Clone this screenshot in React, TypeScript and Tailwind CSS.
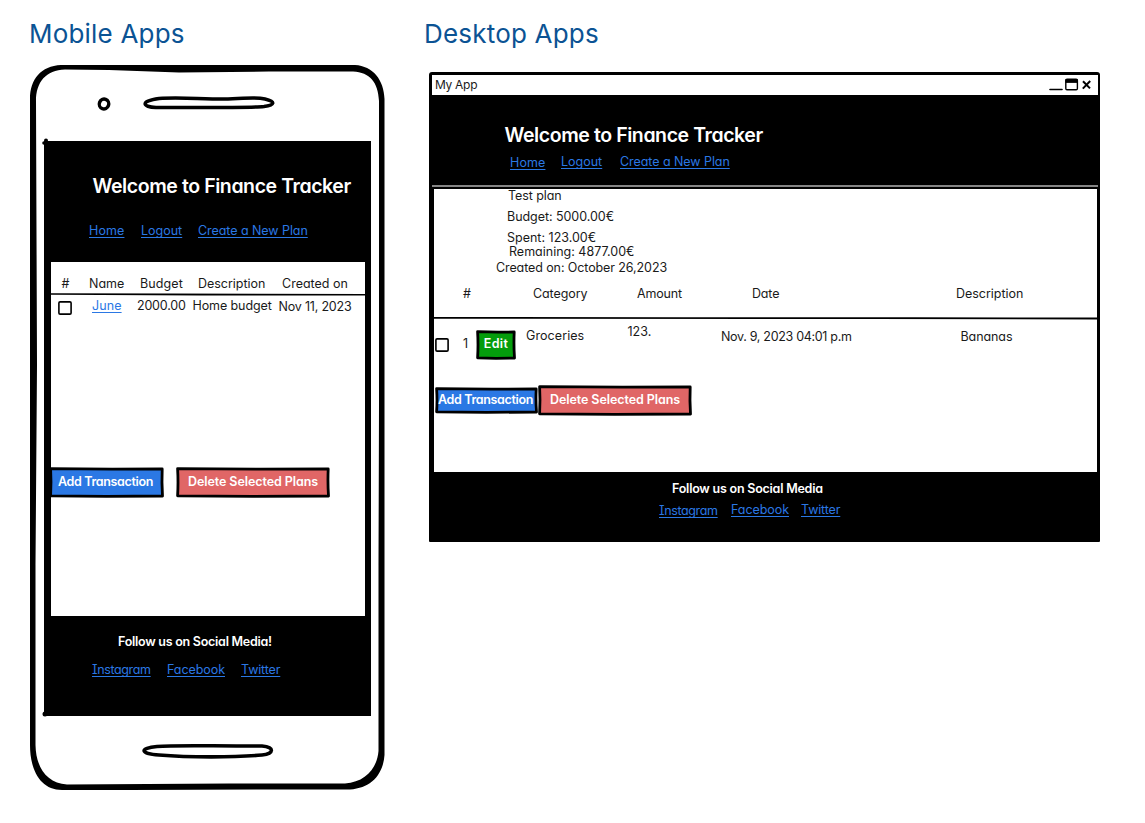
import React from "react";

function T({ c, children }: { c: string; children: string }) {
  return <span className={`block shrink-0 whitespace-nowrap ${c}`}>{children}</span>;
}

function Link({ c, children }: { c: string; children: string }) {
  return (
    <a
      href="#"
      className={`block shrink-0 whitespace-nowrap text-[#2b78e4] underline decoration-1 underline-offset-2 [text-decoration-skip-ink:none] ${c}`}
    >
      {children}
    </a>
  );
}

function Checkbox({ c }: { c: string }) {
  return (
    <svg className={`block h-3.5 w-3.5 shrink-0 ${c}`} viewBox="0 0 14 14">
      <rect x="0.900" y="0.900" width="12.200" height="12.200" rx="1.200" fill="#fff" stroke="#000" strokeWidth="1.600" />
    </svg>
  );
}

function SketchButton({
  w,
  h,
  fill,
  c,
  children,
}: {
  w: number;
  h: number;
  fill: string;
  c: string;
  children: React.ReactNode;
}) {
  return (
    <button className={`relative block shrink-0 text-[12.5px] leading-4 font-semibold text-white ${c}`}>
      <svg className="absolute inset-0" width={w} height={h} viewBox={`0 0 ${w} ${h}`}>
        <path
          d={`M1.6 1.6 L${w * 0.55} 2.2 L${w - 1.8} 2 Q${w - 2.4} ${h / 2} ${w - 1.5} ${h - 2} L${w * 0.5} ${h - 1.6} L1.6 ${h - 2.2} Q2.4 ${h / 2} 1.6 1.6 Z`}
          fill={fill}
          stroke="#000"
          strokeWidth="2.8"
          strokeLinejoin="round"
        />
      </svg>
      <span className="relative block">{children}</span>
    </button>
  );
}

function PhoneOutline() {
  return (
    <svg className="absolute inset-0" width="356" height="725" viewBox="0 0 356 725" fill="none">
      <path
        fill="#000"
        fillRule="evenodd"
        d="M32 0 H326 C344 1 355 15 355.500 34 V690 C354 710 342 723 321 724.500 H230 L100 725 L33 725 C12 725 1 706 1 680 V34 C1 14 12 1 32 0 Z
           M36 4.500 C17 5 7 17 7 36 L8 300 L6.500 500 V680 C7 703 18 718 38 719.500 L200 718.500 H316 C336 717 348 704 349.500 686 V500 L350 340 V36 C349 17 341 7.500 324 6.500 H240 L150 7.500 L80 5 Z"
      />
      <ellipse cx="75" cy="39" rx="4.700" ry="5" transform="rotate(20 75 39)" stroke="#000" strokeWidth="3.400" />
      <path
        d="M130 33.500 C150 32 170 34 195 34 C215 34 225 31.500 236 34 C247 36.500 246 40 235 41.500 C220 43 160 42.500 127 42.500 C113 42 111 36 130 33.500 Z"
        stroke="#000"
        strokeWidth="3.500"
      />
      <path
        d="M128 681.500 C145 680 175 681 233 681 C246 682 245 689 233 690 C205 692.500 160 692.500 130 690 C111 689 110 683 128 681.500 Z"
        stroke="#000"
        strokeWidth="3.600"
      />
      <circle cx="17" cy="75.500" r="2" fill="#000" />
      <circle cx="15" cy="78" r="1.800" fill="#000" />
      <circle cx="16" cy="649" r="2.500" fill="#000" />
    </svg>
  );
}

function Phone() {
  return (
    <section className="relative mt-4 h-[725px] w-[356px] pt-[76px] pl-[15px]">
      <PhoneOutline />
      <div className="relative h-[575px] w-[327px] bg-black pr-1.5 pl-[7px]">
        <header className="h-[121px] pt-[33px] text-white">
          <T c="ml-[41.5px] text-[19.5px] leading-6 font-semibold tracking-[-0.42px]">Welcome to Finance Tracker</T>
          <nav className="mt-[25px] flex">
            <Link c="ml-[38px] w-[52px] tracking-[0.1px]">Home</Link>
            <Link c="w-[57px]">Logout</Link>
            <Link c="tracking-[-0.06px]">Create a New Plan</Link>
          </nav>
        </header>
        <main className="h-[354px] bg-white pt-3.5">
          <div className="flex">
            <T c="ml-[10.5px] w-[27.5px]">#</T>
            <T c="w-[51px]">Name</T>
            <T c="w-[58px] tracking-[0.1px]">Budget</T>
            <T c="w-[84px] tracking-[-0.03px]">Description</T>
            <T c="">Created on</T>
          </div>
          <svg className="mt-px block" width="314" height="3" viewBox="0 0 314 3">
            <path d="M0 0.200 L120 0.600 L314 0.900 V2.400 L150 2.500 L0 1.700 Z" fill="#000" />
          </svg>
          <div className="mt-0.5 flex">
            <Checkbox c="mt-[3px] ml-[7px] mr-5" />
            <Link c="w-[45px] tracking-[0.1px]">June</Link>
            <T c="w-[55.5px] tracking-[-0.2px]">2000.00</T>
            <T c="w-[86px] tracking-[-0.1px]">Home budget</T>
            <T c="mt-px tracking-[-0.2px]">Nov 11, 2023</T>
          </div>
          <div className="mt-[152px] flex">
            <SketchButton w={115} h={31} fill="#2b78e4" c="-ml-0.5 h-[31px] w-[115px] pr-0.5 pb-px tracking-[-0.34px]">
              Add Transaction
            </SketchButton>
            <SketchButton w={154} h={31} fill="#e06666" c="ml-3 h-[31px] w-[154px] pb-0.5 tracking-[-0.08px]">
              Delete Selected Plans
            </SketchButton>
          </div>
        </main>
        <footer className="pt-[18px] text-white">
          <T c="ml-[67px] font-semibold tracking-[-0.26px]">Follow us on Social Media!</T>
          <nav className="mt-3 flex">
            <Link c="ml-[41px] w-[75px] tracking-[-0.36px]">Instagram</Link>
            <Link c="w-[74px] tracking-[-0.06px]">Facebook</Link>
            <Link c="tracking-[-0.15px]">Twitter</Link>
          </nav>
        </footer>
      </div>
    </section>
  );
}

function WindowControls() {
  return (
    <svg width="44" height="14" viewBox="0 0 44 14" fill="none" stroke="#000">
      <path d="M1 11.500 H13" strokeWidth="1.600" strokeLinecap="round" />
      <rect x="16.800" y="1.300" width="11.600" height="10.400" rx="1.200" strokeWidth="1.400" />
      <path d="M16.800 1.500 H28.400 V4.500 H16.800 Z" fill="#000" strokeWidth="0.800" />
      <path d="M34 3.200 L41 10.400 M41.200 3 L33.800 10.600" strokeWidth="2" />
    </svg>
  );
}

function DesktopWindow() {
  return (
    <section className="mt-[23px] ml-[5px] h-[470px] w-[671px] rounded-t-[3px] rounded-b-[1px] bg-black pt-[3px] pr-0.5 pl-[3px]">
      <div className="flex h-5 items-center justify-between bg-white pr-[5px] pl-[3px]">
        <T c="text-[12px] tracking-[-0.3px]">My App</T>
        <WindowControls />
      </div>
      <header className="h-[90px] pt-7 text-white">
        <T c="ml-[72.5px] text-[19.5px] leading-6 font-semibold tracking-[-0.42px]">Welcome to Finance Tracker</T>
        <nav className="mt-[7px] flex">
          <Link c="mt-px ml-[78px] w-[51px] tracking-[0.1px]">Home</Link>
          <Link c="w-[59px]">Logout</Link>
          <Link c="tracking-[-0.06px]">Create a New Plan</Link>
        </nav>
      </header>
      <div className="h-0.5 bg-[#858585]" />
      <main className="mt-0.5 mr-px ml-0.5 flow-root h-[283px] bg-white">
        <div className="-mt-px h-[93px]">
          <T c="ml-[74px] pb-[5px] tracking-[-0.08px]">Test plan</T>
          <T c="ml-[73px] pb-[5px] tracking-[-0.05px]">Budget: 5000.00€</T>
          <T c="ml-[73px] pt-px leading-[14px]">Spent: 123.00€</T>
          <T c="ml-[75px] leading-[14px]">Remaining: 4877.00€</T>
          <T c="ml-[62px] pt-px tracking-[-0.1px]">Created on: October 26,2023</T>
        </div>
        <div className="flex h-9 pt-[5px]">
          <T c="ml-[29px] w-[70px]">#</T>
          <T c="w-[104px] tracking-[-0.08px]">Category</T>
          <T c="w-[115px] tracking-[-0.15px]">Amount</T>
          <T c="w-[204px] tracking-[-0.15px]">Date</T>
          <T c="tracking-[-0.03px]">Description</T>
        </div>
        <svg className="block" width="663" height="3" viewBox="0 0 663 3">
          <path d="M0 0 L250 0.200 L480 0.300 L663 0.600 V2.400 L440 2 L0 1.700 Z" fill="#000" />
        </svg>
        <div className="flex h-[66px]">
          <Checkbox c="mt-[18px] ml-px mr-3.5" />
          <T c="mt-4 w-[13px]">1</T>
          <SketchButton w={40} h={30} fill="#049d0c" c="mt-2.5 h-[30px] w-10 pb-0.5 tracking-[0.3px]">
            Edit
          </SketchButton>
          <T c="mt-2 ml-2.5 w-[101.5px] tracking-[0.08px]">Groceries</T>
          <T c="mt-1 w-[93.5px]">123.</T>
          <T c="mt-[9px] w-[239.5px] tracking-[-0.31px]">Nov. 9, 2023 04:01 p.m</T>
          <T c="mt-[9px] tracking-[-0.08px]">Bananas</T>
        </div>
        <div className="flex">
          <SketchButton w={103} h={27} fill="#2b78e4" c="ml-px mt-px h-[27px] w-[103px] pr-0.5 pb-0.5 tracking-[-0.34px]">
            Add Transaction
          </SketchButton>
          <SketchButton w={154} h={31} fill="#e06666" c="-mt-px h-[31px] w-[154px] pb-0.5 tracking-[-0.08px]">
            Delete Selected Plans
          </SketchButton>
        </div>
      </main>
      <footer className="pt-[9px] text-white">
        <T c="ml-[240px] font-semibold tracking-[-0.23px]">Follow us on Social Media</T>
        <nav className="mt-[5px] flex">
          <Link c="mt-px ml-[227px] w-[72px] tracking-[-0.36px]">Instagram</Link>
          <Link c="w-[70px] tracking-[-0.06px]">Facebook</Link>
          <Link c="tracking-[-0.15px]">Twitter</Link>
        </nav>
      </footer>
    </section>
  );
}

export default function App() {
  return (
    <div className="flex h-[823px] w-[1145px] overflow-hidden bg-white font-['Inter',sans-serif] text-[12.5px] leading-4 text-[#1a1a1a] [font-feature-settings:'cv11','cv08']">
      <div className="w-[395px] shrink-0 pt-[19px] pl-[29px]">
        <h1 className="h-[30px] text-[26px] leading-[30px] tracking-[0.2px] text-[#0b5394]">Mobile Apps</h1>
        <Phone />
      </div>
      <div className="pt-[19px] pl-[29px]">
        <h1 className="h-[30px] text-[26px] leading-[30px] tracking-[0.2px] text-[#0b5394]">Desktop Apps</h1>
        <DesktopWindow />
      </div>
    </div>
  );
}
